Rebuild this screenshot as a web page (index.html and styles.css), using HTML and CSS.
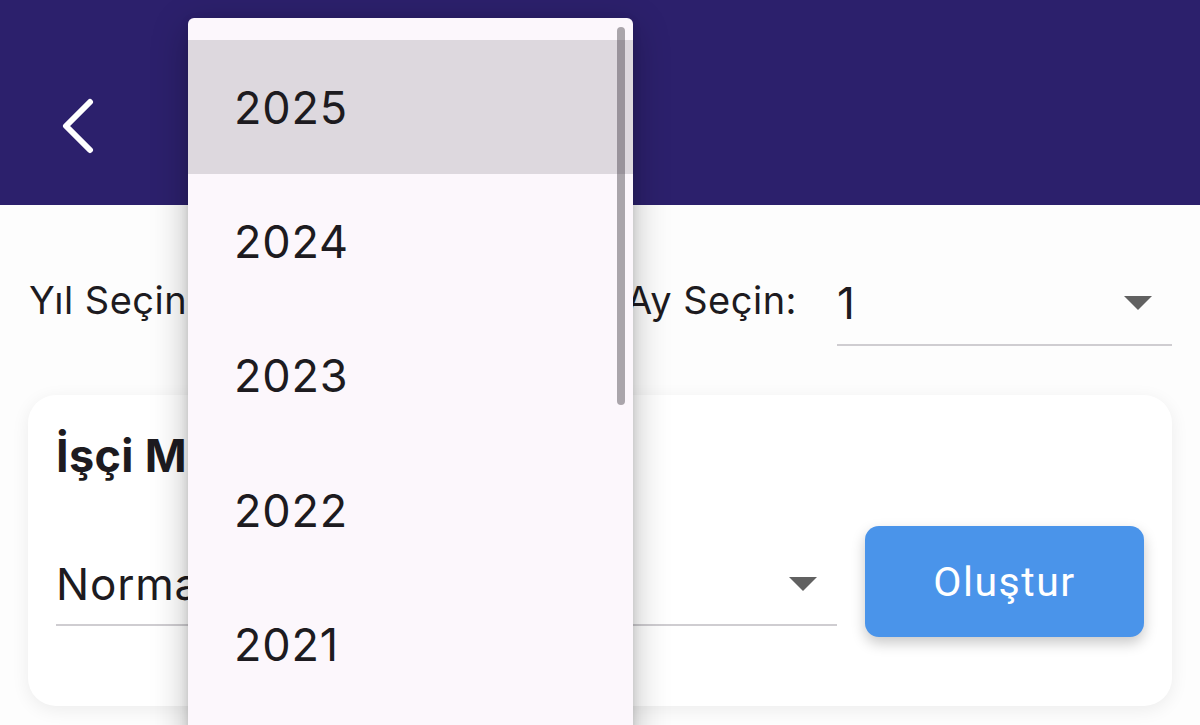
FILE: index.html
```html
<!DOCTYPE html>
<html lang="tr">
<head>
<meta charset="utf-8">
<title>Bordro</title>
<link rel="stylesheet" href="styles.css">
</head>
<body>
<div class="screen">
  <header class="appbar">
    <button class="back" aria-label="Geri">
      <svg width="40" height="60" viewBox="0 0 40 60"><path d="M32 4 L8 28 L32 52" fill="none" stroke="#fff" stroke-width="6" stroke-linecap="round" stroke-linejoin="round"/></svg>
    </button>
  </header>

  <main class="content">
    <div class="filters">
      <div class="filter year">
        <span class="label">Yıl Seçin:</span>
        <div class="select">
          <span class="value">2025</span>
          <span class="caret"></span>
        </div>
      </div>
      <div class="filter month">
        <span class="label">Ay Seçin:</span>
        <div class="select">
          <span class="value">1</span>
          <span class="caret"></span>
        </div>
      </div>
    </div>

    <section class="card">
      <h2 class="card-title">İşçi Maaş</h2>
      <div class="card-row">
        <div class="select wide">
          <span class="value">Normal</span>
          <span class="caret"></span>
        </div>
        <button class="create">Oluştur</button>
      </div>
    </section>
  </main>

  <div class="menu">
    <div class="item active">2025</div>
    <div class="item">2024</div>
    <div class="item">2023</div>
    <div class="item">2022</div>
    <div class="item">2021</div>
    <div class="scrollbar"></div>
  </div>
</div>
</body>
</html>
```

FILE: styles.css
```css
* { box-sizing: border-box; }

html, body {
  margin: 0;
  padding: 0;
  width: 1200px;
  height: 725px;
  overflow: hidden;
  background: #fdfdfd;
  font-family: Inter, "Noto Sans", "DejaVu Sans", sans-serif;
  color: #1d1b20;
}

.screen {
  position: relative;
  width: 1200px;
  height: 725px;
  overflow: hidden;
}

.appbar {
  height: 205px;
  background: #2c206c;
  display: flex;
  align-items: center;
  padding-left: 58px;
}

.back {
  background: none;
  border: 0;
  padding: 0;
  margin-top: 50px;
  display: flex;
}

.content {
  padding: 0 28px;
}

.filters {
  display: flex;
  align-items: center;
  height: 190px;
}

.filter {
  display: flex;
  align-items: center;
  flex: 1;
}

.filter.year { flex: 0 0 598px; padding-left: 1px; }
.filter.month { flex: 1; }

.label {
  font-size: 38px;
  letter-spacing: 0.5px;
  color: #1d1b20;
  white-space: nowrap;
}

.filter .select {
  margin-left: 40px;
  flex: 1;
}

.select {
  display: flex;
  align-items: center;
  justify-content: space-between;
  height: 92px;
  border-bottom: 2px solid #cfcdd1;
  padding-top: 8px;
  padding-right: 20px;
}

.value {
  font-size: 44px;
  letter-spacing: 0.8px;
  color: #1d1b20;
}

.caret {
  width: 0;
  height: 0;
  border-left: 14px solid transparent;
  border-right: 14px solid transparent;
  border-top: 14px solid #616161;
}

.card {
  background: #fff;
  border-radius: 28px;
  box-shadow: 0 4px 18px rgba(0, 0, 0, 0.07);
  padding: 28px 28px 69px 28px;
}

.card-title {
  margin: 0;
  font-size: 45px;
  font-weight: 700;
  line-height: 66px;
  letter-spacing: 0.3px;
  color: #1d1b20;
}

.card-row {
  display: flex;
  align-items: center;
  gap: 28px;
  margin-top: 37px;
}

.select.wide {
  flex: 1;
  height: 89px;
  padding-top: 7px;
}

.create {
  flex: 0 0 279px;
  height: 111px;
  background: #4a94ea;
  color: #fff;
  border: 0;
  border-radius: 14px;
  font-family: Roboto, "Liberation Sans", sans-serif;
  font-size: 41px;
  letter-spacing: 1.5px;
  box-shadow: 0 6px 14px rgba(0, 0, 0, 0.22);
}

.menu {
  position: absolute;
  left: 188px;
  top: 18px;
  width: 445px;
  height: 900px;
  background: #fcf7fc;
  border-radius: 6px;
  padding-top: 22px;
  box-shadow: 0 10px 36px rgba(0, 0, 0, 0.28), 0 2px 8px rgba(0, 0, 0, 0.12);
}

.item {
  height: 134.3px;
  display: flex;
  align-items: center;
  padding-left: 46px;
  font-size: 45px;
  letter-spacing: 0.8px;
  color: #1d1b20;
}

.item.active {
  background: #ddd8de;
}

.scrollbar {
  position: absolute;
  top: 9px;
  right: 8px;
  width: 8px;
  height: 378px;
  border-radius: 4px;
  background: rgba(70, 64, 74, 0.45);
}
```
